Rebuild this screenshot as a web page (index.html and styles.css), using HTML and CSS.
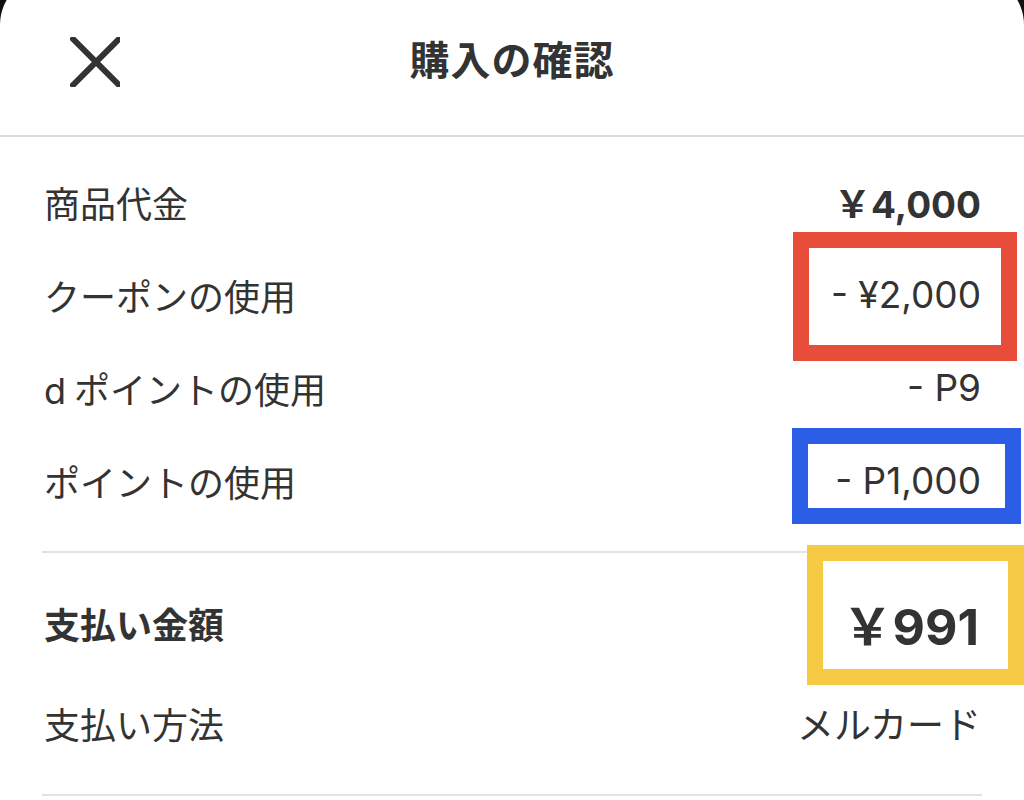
FILE: index.html
```html
<!DOCTYPE html>
<html lang="ja">
<head>
<meta charset="utf-8">
<title>購入の確認</title>
<link rel="stylesheet" href="styles.css">
</head>
<body>
<div class="sheet">
  <header class="header">
    <button class="close" aria-label="閉じる">
      <svg width="50" height="50" viewBox="0 0 50 50"><path d="M3 2 L49 48 M49 2 L3 48" stroke="#333" stroke-width="6" stroke-linecap="round" fill="none"/></svg>
    </button>
    <h1 class="title">購入の確認</h1>
    <span class="spacer"></span>
  </header>

  <section class="section">
    <div class="row"><span class="label">商品代金</span><span class="value bold">￥4,000</span></div>
    <div class="row"><span class="label">クーポンの使用</span><span class="value">- ¥2,000</span></div>
    <div class="row"><span class="label"><span class="latin">d</span> ポイントの使用</span><span class="value">- P9</span></div>
    <div class="row"><span class="label">ポイントの使用</span><span class="value">- P1,000</span></div>
  </section>

  <section class="section second">
    <div class="row tall"><span class="label bold">支払い金額</span><span class="value total">￥991</span></div>
    <div class="row tall"><span class="label">支払い方法</span><span class="value">メルカード</span></div>
  </section>

  <div class="mark mark-red"></div>
  <div class="mark mark-blue"></div>
  <div class="mark mark-yellow"></div>
</div>
</body>
</html>
```

FILE: styles.css
```css
html, body {
  margin: 0;
  padding: 0;
  background: #111;
  overflow: hidden;
}

body {
  font-family: "Noto Sans CJK JP", sans-serif;
  color: #333;
}

.sheet {
  position: relative;
  margin-top: -25px;
  background: #fff;
  border-radius: 50px 50px 0 0;
  min-height: 835px;
}

.header {
  display: grid;
  grid-template-columns: 1fr auto 1fr;
  align-items: center;
  height: 124px;
  padding: 25px 0 11px;
  border-bottom: 2px solid #dcdcdc;
}

.close {
  justify-self: start;
  margin-left: 70px;
  padding: 0;
  border: 0;
  background: none;
  width: 50px;
  height: 50px;
  display: flex;
}

.title {
  margin: 0 0 8px;
  font-size: 40px;
  font-weight: 700;
  letter-spacing: 1px;
  color: #333;
}

.section {
  margin: 0 42px;
  padding: 18px 0 24px;
  border-bottom: 2px solid #e2e2e2;
}

.section.second {
  padding: 20px 0 21px;
}

.row {
  display: flex;
  justify-content: space-between;
  align-items: center;
  height: 93px;
  font-size: 36px;
}

.row.tall {
  height: 100px;
}

.label {
  font-weight: 400;
  color: #333;
  padding-left: 2px;
}

.latin {
  font-family: "Inter", "Noto Sans CJK JP", sans-serif;
}

.value {
  font-family: "Inter", "Noto Sans CJK JP", sans-serif;
  font-size: 37px;
  color: #333;
  padding-right: 1px;
}

.bold {
  font-weight: 700;
}

.value.total {
  font-size: 50px;
  font-weight: 700;
  padding-right: 3px;
}

.mark {
  position: absolute;
  box-sizing: border-box;
  border: 16px solid;
}

.mark-red {
  left: 793px;
  top: 257px;
  width: 224px;
  height: 129px;
  border-color: #e84c3b;
}

.mark-blue {
  left: 792px;
  top: 453px;
  width: 229px;
  height: 96px;
  border-color: #2c5de6;
}

.mark-yellow {
  left: 807px;
  top: 570px;
  width: 217px;
  height: 140px;
  border-color: #f6ca45;
}
```
